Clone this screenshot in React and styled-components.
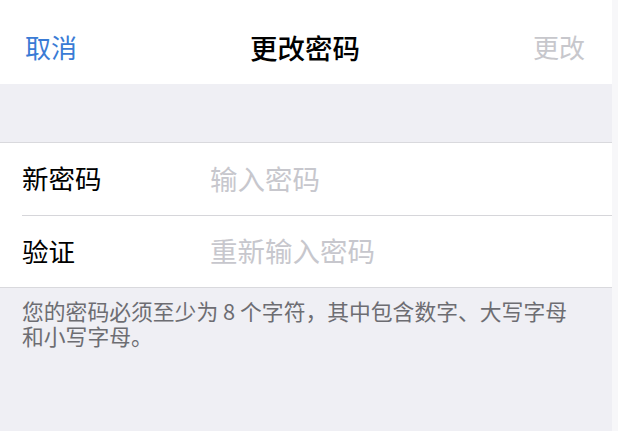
import React from "react";
import styled, { createGlobalStyle } from "styled-components";

const GlobalStyle = createGlobalStyle`
  html, body {
    margin: 0;
    padding: 0;
    background: #efeff4;
    font-family: "Noto Sans CJK SC", "Noto Sans", sans-serif;
  }
`;

const Page = styled.div`
  display: flex;
  width: 618px;
  height: 431px;
  overflow: hidden;
`;

const Screen = styled.div`
  width: 612px;
  display: flex;
  flex-direction: column;
  background: #efeff4;
`;

const EdgeStrip = styled.div`
  flex: 1;
  background: #f7f7f9;
`;

const NavBar = styled.header`
  height: 84px;
  box-sizing: border-box;
  padding: 10px 27px 0 25px;
  background: #ffffff;
  display: grid;
  grid-template-columns: 1fr auto 1fr;
  align-items: center;
`;

const NavButton = styled.button`
  border: none;
  background: none;
  padding: 0;
  font-family: inherit;
  font-size: 26px;
  line-height: 30px;
  color: ${(p) => (p.$disabled ? "#c7c7cc" : "#3a7bd5")};
  justify-self: ${(p) => (p.$right ? "end" : "start")};
`;

const Title = styled.h1`
  margin: 0;
  font-size: 27.5px;
  line-height: 30px;
  font-weight: 500;
  color: #000000;
`;

const Spacer = styled.div`
  height: 58px;
`;

const Group = styled.section`
  background: #ffffff;
  border-top: 1px solid #d9d9dd;
  border-bottom: 1px solid #d9d9dd;
  padding-left: 22px;
`;

const Row = styled.label`
  display: grid;
  grid-template-columns: 188px 1fr;
  align-items: center;
  height: 72px;
  box-sizing: border-box;
  padding-bottom: 3px;
  & + & {
    border-top: 1px solid #d6d6da;
  }
`;

const RowLabel = styled.span`
  font-size: 26.5px;
  color: #000000;
`;

const Field = styled.input`
  border: none;
  outline: none;
  background: transparent;
  padding: 0;
  font-family: inherit;
  font-size: 27.5px;
  color: #000000;
  &::placeholder {
    color: #c7c7cd;
  }
`;

const Footnote = styled.p`
  margin: 0;
  padding: 10px 36px 0 22px;
  font-size: 21.8px;
  line-height: 25px;
  color: #6d6d72;
`;

const App = () => {
  return (
    <>
      <GlobalStyle />
      <Page>
        <Screen>
          <NavBar>
            <NavButton>取消</NavButton>
            <Title>更改密码</Title>
            <NavButton $right $disabled>
              更改
            </NavButton>
          </NavBar>

          <Spacer />

          <Group>
            <Row>
              <RowLabel>新密码</RowLabel>
              <Field type="password" placeholder="输入密码" />
            </Row>
            <Row>
              <RowLabel>验证</RowLabel>
              <Field type="password" placeholder="重新输入密码" />
            </Row>
          </Group>

          <Footnote>
            您的密码必须至少为 8 个字符，其中包含数字、大写字母和小写字母。
          </Footnote>
        </Screen>
        <EdgeStrip />
      </Page>
    </>
  );
};

export default App;
